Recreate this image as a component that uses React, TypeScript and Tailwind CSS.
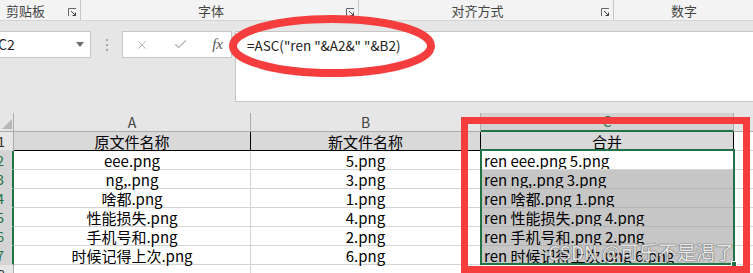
import React from "react";
import { X, Check } from "lucide-react";

const FONT = '"Noto Sans CJK SC", "Noto Sans", sans-serif';

function Launcher() {
  return (
    <svg width="9" height="9" viewBox="0 0 9 9" className="block">
      <path d="M0.5 8V0.5H8" fill="none" stroke="#666" strokeWidth="1" />
      <path d="M3 3L7.5 7.5M7.5 4.5V7.5H4.5" fill="none" stroke="#444" strokeWidth="1" />
    </svg>
  );
}

const rows = [
  ["eee.png", "5.png", "ren eee.png 5.png"],
  ["ng,.png", "3.png", "ren ng,.png 3.png"],
  ["啥都.png", "1.png", "ren 啥都.png 1.png"],
  ["性能损失.png", "4.png", "ren 性能损失.png 4.png"],
  ["手机号和.png", "2.png", "ren 手机号和.png 2.png"],
  ["时候记得上次.png", "6.png", "ren 时候记得上次.png 6.png"],
];

function RowHead({ n, selected }: { n: number; selected: boolean }) {
  return (
    <div
      className={
        "h-[19px] flex justify-end items-center overflow-hidden border-b border-[#d4d4d4] pr-[8px] text-[14px] leading-none " +
        (selected
          ? "bg-[#d4d4d4] text-[#217346] border-r-2 border-r-[#217346]"
          : "bg-[#e6e6e6] text-[#333] border-r border-r-[#ababab]")
      }
    >
      <span className="shrink-0">{n}</span>
    </div>
  );
}

export default function App() {
  return (
    <div
      className="relative w-[753px] h-[273px] overflow-hidden bg-[#e6e6e6]"
      style={{ fontFamily: FONT }}
    >
      {/* Ribbon group labels */}
      <div className="flex h-[21px] bg-[#f3f3f3] border-b border-[#d5d5d5] text-[13px] text-[#444] leading-none">
        <div className="w-[81px] flex items-center justify-between border-r border-[#c8c8c8] pl-[6px] pr-[3px]">
          <span>剪贴板</span>
          <span className="mt-[4px]"><Launcher /></span>
        </div>
        <div className="relative w-[278px] flex items-center justify-center border-r border-[#c8c8c8] pr-[17px]">
          <span>字体</span>
          <span className="absolute right-[3px] top-[8px]"><Launcher /></span>
        </div>
        <div className="relative w-[255px] flex items-center justify-center border-r border-[#c8c8c8] pr-[17px]">
          <span>对齐方式</span>
          <span className="absolute right-[3px] top-[8px]"><Launcher /></span>
        </div>
        <div className="flex-1 flex items-center pl-[57px]">
          <span>数字</span>
        </div>
      </div>
      <div className="h-[10px]" />

      {/* Formula bar */}
      <div className="flex items-start h-[71px]">
        <div className="w-[91px] h-[27px] bg-white border border-l-0 border-[#c6c6c6] flex items-center justify-between pr-[6px]">
          <span className="-ml-[2px] text-[14px] text-[#222]">C2</span>
          <svg width="8" height="5" viewBox="0 0 8 5"><path d="M0 0H8L4 5Z" fill="#707070" /></svg>
        </div>
        <div className="w-[31px] h-[27px] flex flex-col items-center justify-center gap-[3px]">
          <div className="w-[2px] h-[2px] bg-[#a8a8a8]" />
          <div className="w-[2px] h-[2px] bg-[#a8a8a8]" />
          <div className="w-[2px] h-[2px] bg-[#a8a8a8]" />
        </div>
        <div className="w-[110px] h-[27px] bg-white border border-[#c6c6c6] flex items-center pl-[12px] pr-[8px] justify-between">
          <X size={14} color="#b0b0b0" strokeWidth={1.6} />
          <Check size={15} color="#b0b0b0" strokeWidth={1.8} />
          <span
            className="italic text-[15px] text-[#555] leading-none"
            style={{ fontFamily: '"Liberation Serif", serif' }}
          >
            fx
          </span>
        </div>
        <div className="ml-[3px] flex-1 h-[71px] bg-white border border-r-0 border-[#c6c6c6] pl-[11px] pt-[3px] text-[13.5px] text-[#222]">
          =ASC("ren "&amp;A2&amp;" "&amp;B2)
        </div>
      </div>
      <div className="h-[11px]" />

      {/* Sheet grid */}
      <div className="grid grid-cols-[14px_237px_230px_253px_1fr] bg-white text-[15px] text-black">
        {/* column headers */}
        <div className="h-[19px] bg-[#e6e6e6] border-r border-b border-[#ababab] relative overflow-hidden">
          <svg width="10" height="10" viewBox="0 0 10 10" className="absolute right-[1px] bottom-[2px]">
            <path d="M10 0V10H0Z" fill="#b7b7b7" />
          </svg>
        </div>
        <div className="h-[19px] bg-[#e6e6e6] border-r border-b border-[#ababab] flex items-center justify-center text-[14px] text-[#444]">A</div>
        <div className="h-[19px] bg-[#e6e6e6] border-r border-b border-[#ababab] flex items-center justify-center text-[14px] text-[#444]">B</div>
        <div className="h-[19px] bg-[#d2d2d2] border-r border-[#ababab] border-b-2 border-b-[#217346] flex items-center justify-center text-[14px] text-[#217346]">C</div>
        <div className="h-[19px] bg-[#e6e6e6] border-b border-[#ababab]" />

        {/* row 1 */}
        <RowHead n={1} selected={false} />
        <div className="h-[19px] bg-[#d9d9d9] border-r border-b border-black flex items-center justify-center leading-none">原文件名称</div>
        <div className="h-[19px] bg-[#d9d9d9] border-r border-b border-black flex items-center justify-center leading-none">新文件名称</div>
        <div className="h-[19px] bg-[#d9d9d9] border-r border-b border-black flex items-center justify-center leading-none">合并</div>
        <div className="h-[19px] border-b border-[#d4d4d4]" />

        {rows.map((r, i) => (
          <React.Fragment key={i}>
            <RowHead n={i + 2} selected={true} />
            <div className="h-[19px] border-r border-b border-[#d4d4d4] flex items-center justify-center leading-none pt-[1px]">{r[0]}</div>
            <div className="h-[19px] border-r border-b border-[#d4d4d4] flex items-center justify-center leading-none pt-[1px]">{r[1]}</div>
            <div
              className={
                "h-[19px] border-r border-b flex items-center pl-[3px] pt-[1px] leading-none whitespace-nowrap overflow-hidden " +
                (i === 0 ? "bg-white border-[#d4d4d4]" : "bg-[#c6c6c6] border-[#b4b4b4]")
              }
            >
              {r[2]}
            </div>
            <div className="h-[19px] border-b border-[#d4d4d4]" />
          </React.Fragment>
        ))}

        <RowHead n={8} selected={false} />
        <div className="h-[19px] border-r border-b border-[#d4d4d4]" />
        <div className="h-[19px] border-r border-b border-[#d4d4d4]" />
        <div className="h-[19px] border-r border-b border-[#d4d4d4]" />
        <div className="h-[19px] border-b border-[#d4d4d4]" />
      </div>

      {/* Selection border */}
      <div className="absolute left-[480px] top-[149px] w-[255px] h-[116px] border-2 border-[#217346] pointer-events-none" />
      <div className="absolute left-[731px] top-[261px] w-[6px] h-[6px] bg-[#217346] border border-white pointer-events-none" />

      {/* Watermark */}
      <div
        className="absolute z-10 left-[548px] top-[242px] text-[19px] leading-none whitespace-nowrap text-[#f2f2f2] opacity-80 pointer-events-none"
        style={{ textShadow: "0 0 1px #555, 0 0 1px #555, 0 0 1px #555" }}
      >
        CSDN @可乐不是渴了
      </div>

      {/* Red annotations */}
      <div className="absolute z-20 left-[461px] top-[117px] w-[289px] h-[156px] border-[7px] border-[#f53d3d] pointer-events-none" />
      <svg className="absolute z-20 left-0 top-0 pointer-events-none" width="753" height="273">
        <ellipse cx="332" cy="46" rx="99" ry="27" fill="none" stroke="#f53d3d" strokeWidth="8" />
      </svg>
    </div>
  );
}
